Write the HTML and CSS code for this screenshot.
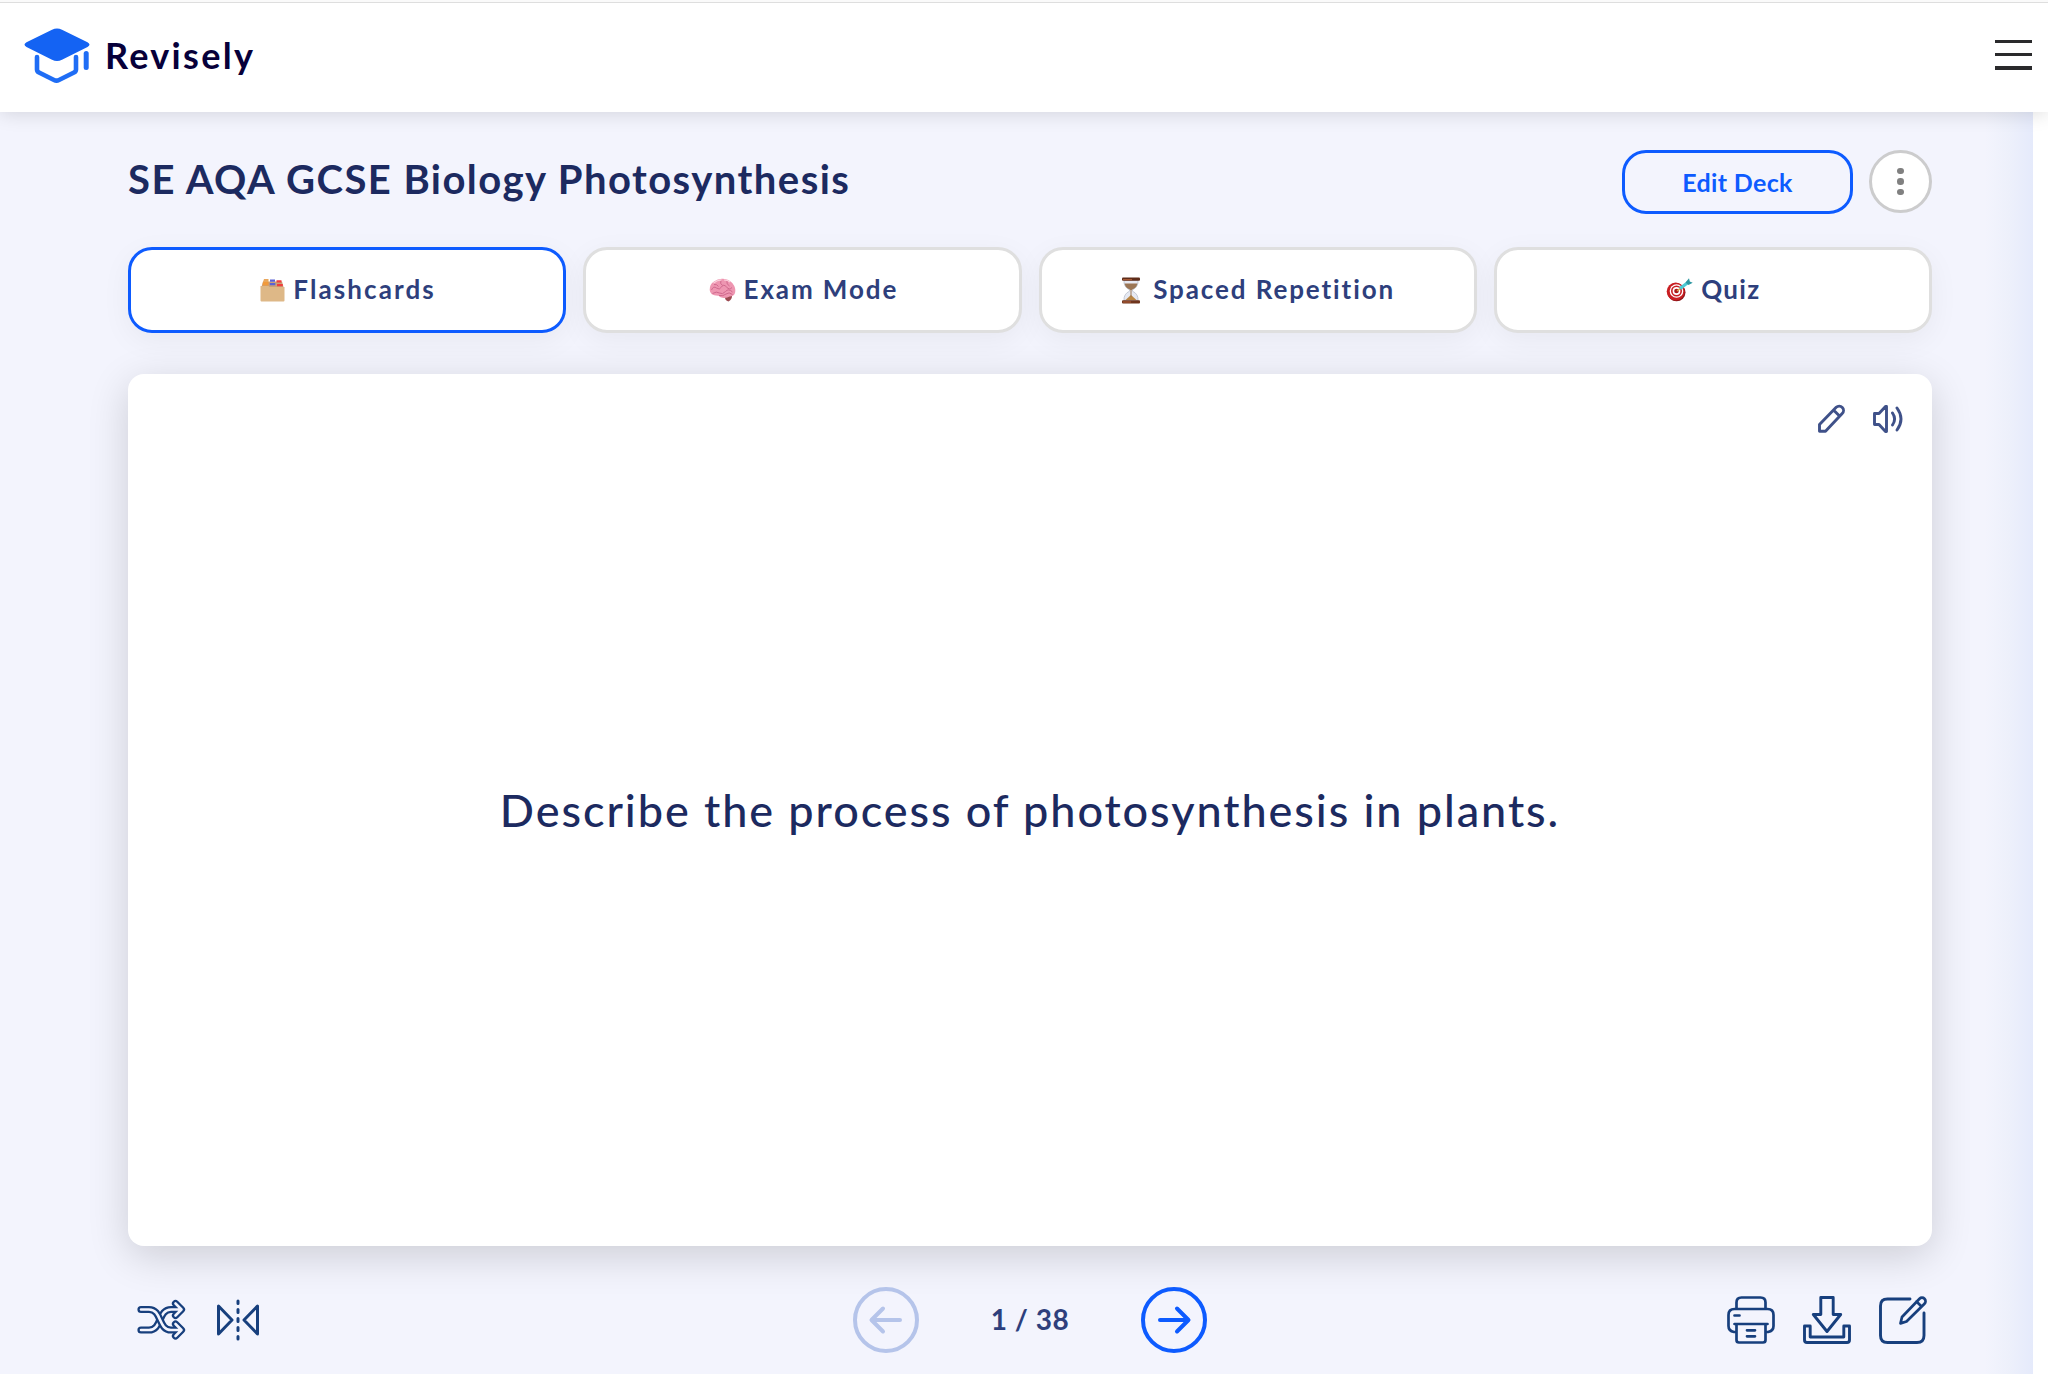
FILE: index.html
```html
<!DOCTYPE html>
<html lang="en">
<head>
<meta charset="utf-8">
<title>SE AQA GCSE Biology Photosynthesis | Revisely</title>
<link rel="stylesheet" href="styles.css">
</head>
<body>
<header class="site-header">
  <a class="brand">
    <svg class="brand-mark" width="66" height="57" viewBox="0 0 66 57">
      <path d="M13 30v12.500q0 2 2 3l15 7.500q2.500 1.200 5 0l15-7.500q2-1 2-3V30" fill="none" stroke="#1f6df5" stroke-width="4.600" stroke-linecap="round" stroke-linejoin="round"/>
      <path d="M62.200 26.500v14" stroke="#1f6df5" stroke-width="5" stroke-linecap="round"/>
      <path d="M28 2.700q5-2.600 10 0l25.500 12.500q4 2.400 0 4.800L38 32.800q-5 2.600-10 0L2.500 20q-4-2.400 0-4.800z" fill="#1463f3"/>
    </svg>
    <span class="brand-name">Revisely</span>
  </a>
  <button class="menu" aria-label="Menu"><i></i><i></i><i></i></button>
</header>
<div class="page">
<main class="deck">
  <div class="deck-head">
    <h1 class="deck-title">SE AQA GCSE Biology Photosynthesis</h1>
    <div class="deck-actions">
      <button class="edit"><span class="edit-label">Edit Deck</span></button>
      <button class="more" aria-label="More"><i></i><i></i><i></i></button>
    </div>
  </div>
  <nav class="tabs">
    <a class="tab tab-active">
      <svg width="25" height="24" viewBox="0 0 25 24"><path d="M1.500 9L3 3.500h19L23.500 9z" fill="#c9a079"/><path d="M4 1h4.500v3H3z" fill="#e9a75c"/><path d="M3 4h5.500v3.500H2.500z" fill="#f19a3c"/><path d="M10 1.500h5v2.300h-5zM9.800 5h5.500v2.300H9.800z" fill="#5b62d6"/><path d="M16.500 2.300h5v2.200h-5zM17 6h5.800v2.300H17z" fill="#f03d3d"/><path d="M.5 8h8l1 1h15v13.500q0 1-1 1h-22q-1 0-1-1z" fill="#deb887"/></svg>
      <span class="tab-label t1">Flashcards</span></a>
    <a class="tab">
      <svg width="27" height="24" viewBox="0 0 27 24"><path d="M15.500 17q5-.5 7.500 0 .5 4-3.500 6.500-4-1-4-6.500z" fill="#9c4a52"/><path d="M.7 12Q.5 6 5 3.500 9 .3 14 .7q6 .3 9.500 4.500 3.500 4.500 2.700 9-1 4.300-5.700 4.300-3 2-7 1.200-2 0-4-2Q1 18 .7 12z" fill="#ee96b1"/><path d="M2.500 12q2-4.500 5-2t5-1 5 0 5.500.5M5 6.500q3-.5 4.500 2M12 2.500q-1.500 3 1.500 5M18 3q-1 3 2.500 5M3.500 15.500q4-2.500 7-.5t6-1.500 7 .5M10 17.500q4 1 7-1.500t6.500.5" fill="none" stroke="#cf688d"/><path d="M4.500 5q3.500-3 8-3.200M15 2q4 0 6 2" fill="none" stroke="#fbd0dc" stroke-width="1.200"/></svg>
      <span class="tab-label t2">Exam Mode</span></a>
    <a class="tab">
      <svg width="20" height="27" viewBox="0 0 20 27"><path d="M3 3.500h14q.5 6.500-5.500 9.300v1.400q6 2.800 5.500 9.300H3q-.5-6.500 5.500-9.300v-1.400Q2.500 10 3 3.500z" fill="#e6e9f2" stroke="#b9bfcc" stroke-width=".8"/><path d="M3.500 6.500h13q-1 4.500-6 6.500h-1q-5-2-6-6.500z" fill="#9b7655"/><path d="M10 18l5.500 5h-11z" fill="#b98543"/><path d="M10 12v8" stroke="#9b7655"/><rect x="1" y=".5" width="18" height="3.200" rx="1" fill="#5e2c19"/><rect x="1" y="23.300" width="18" height="3.200" rx="1" fill="#6f341c"/><path d="M2 2.700h9M2 25h8" stroke="#b8623b"/></svg>
      <span class="tab-label t3">Spaced Repetition</span></a>
    <a class="tab">
      <svg width="27" height="24" viewBox="0 0 27 24"><circle cx="10.500" cy="14.300" r="9" fill="#8d1619"/><circle cx="9.700" cy="13.500" r="9" fill="#c91e22"/><circle cx="10.500" cy="13" r="6.800" fill="#fff"/><circle cx="10.500" cy="13" r="5.500" fill="#c91e22"/><circle cx="10.500" cy="13" r="3.900" fill="#fff"/><circle cx="10.500" cy="13" r="2.300" fill="#a8171a"/><path d="M11 13l4-3" stroke="#d9a441" stroke-width="1.400"/><path d="M14 10.500L22 4.500" stroke="#4bc9d3" stroke-width="3.200"/><path d="M19.500 4.500L23 .3l.8 3.200 2.900 1.200-4.200 2.300z" fill="#2d98a2"/></svg>
      <span class="tab-label t4">Quiz</span></a>
  </nav>
  <section class="card">
    <div class="card-tools">
      <svg width="28" height="30" viewBox="0 0 28 30" fill="none" stroke="#3f5189" stroke-width="2.900" stroke-linejoin="round"><path d="M2.500 27.300v-6.800L19.200 3.300a4.300 4.300 0 0 1 6 6.200L8.500 27.300zM16.500 6l6 6"/></svg>
      <svg width="32" height="30" viewBox="0 0 32 30" fill="none" stroke="#3f5189" stroke-width="2.900" stroke-linecap="round" stroke-linejoin="round"><path d="M2.500 9.500h4.500L13.500 2.500h1v25h-1L7 20.500H2.500zM20.500 9q4.200 6 0 12M25 4q8 11 0 22"/></svg>
    </div>
    <p class="question"><span class="question-text">Describe the process of photosynthesis in plants.</span></p>
  </section>
  <footer class="controls">
    <div class="group group-left">
      <svg width="50" height="42" viewBox="0 0 50 42" fill="none" stroke-linecap="round" stroke-linejoin="round">
        <g stroke="#173f7d" stroke-width="7.200"><path d="M4 31h8C25 31 21 10.500 34 10.500h9"/><path d="M38.500 4.500l6 6-6 6"/></g>
        <path d="M4 31h8C25 31 21 10.500 34 10.500h9M38.500 4.500l6 6-6 6" stroke="#f3f4fd" stroke-width="2.600"/>
        <g stroke="#173f7d" stroke-width="7.200"><path d="M4 10.500h8C25 10.500 21 31 34 31h9"/><path d="M38.500 25l6 6-6 6"/></g>
        <path d="M4 10.500h8C25 10.500 21 31 34 31h9M38.500 25l6 6-6 6" stroke="#f3f4fd" stroke-width="2.600"/>
      </svg>
      <svg width="44" height="44" viewBox="0 0 44 44" fill="none" stroke="#173f7d" stroke-width="3" stroke-linecap="round" stroke-linejoin="round"><path d="M2.500 8v28L16 22zM41.500 8v28L28 22zM22 3v2.500M22 11.500v3M22 20.500v3M22 29.500v3M22 38.500v2.500"/></svg>
    </div>
    <div class="pager">
      <svg class="dim" width="66" height="66" viewBox="0 0 66 66" fill="none" stroke="currentColor" stroke-width="4" stroke-linecap="round" stroke-linejoin="round"><circle cx="33" cy="33" r="31"/><path d="M47 33H19M30 21.500L18.500 33 30 44.500"/></svg>
      <span class="count">1 / 38</span>
      <svg class="on" width="66" height="66" viewBox="0 0 66 66" fill="none" stroke="currentColor" stroke-width="4" stroke-linecap="round" stroke-linejoin="round"><circle cx="33" cy="33" r="31"/><path d="M19 33h28M36 21.500L47.500 33 36 44.500"/></svg>
    </div>
    <div class="group group-right">
      <svg width="48" height="48" viewBox="0 0 48 48" fill="none" stroke="#173f7d" stroke-width="2.700" stroke-linecap="round" stroke-linejoin="round"><path d="M9.500 13V6.500q0-5 5-5h19q5 0 5 5V13M9 36H7q-5.500-1-5.500-6V19q0-6 6-6h33q6 0 6 6v11q0 5-5.500 6h-2M7.500 28h33M9.500 28v16q0 2.500 2.500 2.500h24q2.500 0 2.500-2.500V28M7.500 19.500h5M20 34.300h8M20 40.300h8"/></svg>
      <svg width="48" height="48" viewBox="0 0 48 48" fill="none" stroke="#173f7d" stroke-width="2.900" stroke-linejoin="round"><path d="M17.800 1.500h12.400v17h7.500L24 35.500 10.300 18.500h7.500zM1.500 30h5.700v11h33.600V30h5.700v14q0 2.500-2.500 2.500H4q-2.500 0-2.500-2.500z"/></svg>
      <svg width="48" height="48" viewBox="0 0 48 48" fill="none" stroke="#173f7d" stroke-width="2.900" stroke-linecap="round" stroke-linejoin="round"><path d="M31 3H8.500q-7 0-7 7v29.500q0 7 7 7H38q7 0 7-7V17"/><path d="M40.500 2.700a3.500 3.500 0 0 1 5 5L27.500 25.500l-6 1.900 1.500-6.400zM37.500 5.500l5 5" stroke-width="2.700"/></svg>
    </div>
  </footer>
</main>
</div>
</body>
</html>
```
FILE: styles.css
```css
* { box-sizing: border-box; }
body {
  margin: 0;
  height: 1374px;
  overflow: hidden;
  background: #fff;
  font-family: Lato, "Open Sans", sans-serif;
  font-variant-ligatures: none;
  color: #1c2a60;
}
button { font: inherit; padding: 0; margin: 0; }
svg { display: block; flex: none; }
.site-header {
  position: relative;
  height: 112px;
  border-top: 2px solid #fafafa;
  background: #fff;
  box-shadow: 0 2px 18px rgba(0, 0, 0, .13);
  display: flex;
  justify-content: space-between;
  align-items: flex-start;
  padding: 25px 16px 0 24px;
}
.site-header::before {
  content: "";
  position: absolute;
  left: 0; right: 0; top: 0;
  height: 1px;
  background: #dedede;
}
.brand { display: flex; gap: 15px; }
.brand-name {
  font-size: 36px;
  font-weight: 700;
  line-height: 56px;
  letter-spacing: 2.300px;
  color: #07003a;
  white-space: nowrap;
}
.menu {
  width: 37px;
  margin-top: 13px;
  border: 0;
  background: none;
  display: flex;
  flex-direction: column;
  gap: 10px;
}
.menu i { height: 3.200px; background: #2a2a2c; }
.page {
  width: 2033px;
  height: 1262px;
  background: linear-gradient(90deg, #f3f4fd 1985px, #edf0fb 2010px, #e5eafb 2033px);
  padding: 38px 101px 0 128px;
}
.deck { display: flex; flex-direction: column; }
.deck-head { display: flex; justify-content: space-between; height: 64px; }
.deck-title {
  margin: 0;
  font-size: 40px;
  font-weight: 700;
  line-height: 58px;
  letter-spacing: 1.450px;
  white-space: nowrap;
}
.deck-actions { display: flex; gap: 16px; }
.edit {
  width: 231px;
  height: 64px;
  border: 3px solid #0d5bff;
  border-radius: 24px;
  background: transparent;
  color: #0d5bff;
  font-size: 25px;
  font-weight: 700;
  letter-spacing: .350px;
  padding-bottom: 1px;
}
.more {
  width: 63px;
  height: 63px;
  border: 3px solid #cccccd;
  border-radius: 50%;
  background: #fff;
  display: flex;
  flex-direction: column;
  align-items: center;
  justify-content: center;
  gap: 4px;
}
.more i { width: 6.500px; height: 6.500px; border-radius: 50%; background: #808080; }
.tabs {
  margin-top: 33px;
  display: grid;
  grid-template-columns: repeat(4, 1fr);
  gap: 17px;
}
.tab {
  height: 86px;
  border: 3px solid #dfdfdf;
  border-radius: 24px;
  background: #fff;
  box-shadow: 0 8px 30px rgba(0, 0, 0, .05);
  display: flex;
  align-items: center;
  justify-content: center;
  gap: 8px;
  font-size: 26px;
  font-weight: 700;
  color: #2e3f7c;
  white-space: nowrap;
}
.tab-active { border-color: #0d5bff; }
.tab-label { padding-bottom: 2px; }
.t1 { letter-spacing: 2.100px; margin-right: -2px; }
.t2 { letter-spacing: 1.900px; margin-right: -2px; }
.t3 { letter-spacing: 1.900px; margin: 0 -1px 0 4px; }
.t4 { letter-spacing: 1.300px; margin-right: -1px; }
.card {
  margin-top: 41px;
  height: 872px;
  border-radius: 16px;
  background: #fff;
  box-shadow: 0 10px 40px rgba(0, 0, 0, .16);
  display: flex;
  flex-direction: column;
  padding: 30px 28px 0;
}
.card-tools { display: flex; justify-content: flex-end; gap: 27px; }
.question {
  margin: 0;
  padding-top: 346px;
  text-align: center;
  font-size: 45px;
  line-height: 60px;
  font-weight: 500;
  letter-spacing: 1.930px;
}
.controls {
  margin-top: 41px;
  height: 66px;
  display: grid;
  grid-template-columns: 1fr auto 1fr;
  align-items: center;
}
.group { display: flex; align-items: center; }
.group-left { gap: 29px; padding-left: 9px; }
.group-right { gap: 28px; justify-content: flex-end; padding-right: 5px; }
.pager { display: flex; align-items: center; width: 354px; justify-content: space-between; }
.dim { color: #b5c4ea; }
.on { color: #0d5bff; }
.count {
  padding-bottom: 2px;
  font-size: 28px;
  font-weight: 700;
  letter-spacing: .500px;
  color: #2e3f7c;
  white-space: nowrap;
}
```
